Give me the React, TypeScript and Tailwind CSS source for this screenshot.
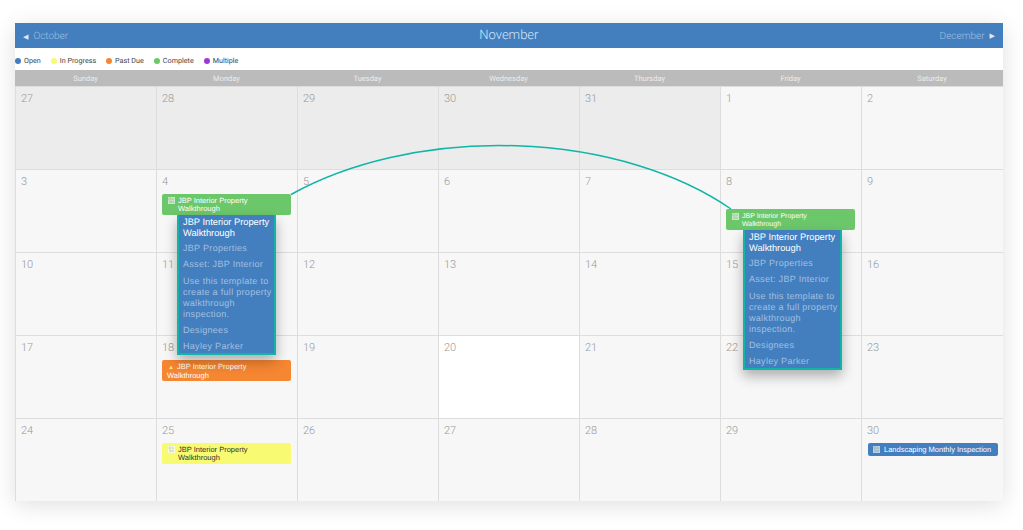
import { Fragment } from "react";

type Status = "green" | "orange" | "yellow";

const LEGEND = [
  { label: "Open", dot: "bg-[#437fbf]" },
  { label: "In Progress", dot: "bg-[#f8fb72]" },
  { label: "Past Due", dot: "bg-[#f58632]" },
  { label: "Complete", dot: "bg-[#6cc76b]" },
  { label: "Multiple", dot: "bg-[#9b3ad6]" },
];

const DAYS = ["Sunday", "Monday", "Tuesday", "Wednesday", "Thursday", "Friday", "Saturday"];

const WEEKS = [
  [27, 28, 29, 30, 31, 1, 2],
  [3, 4, 5, 6, 7, 8, 9],
  [10, 11, 12, 13, 14, 15, 16],
  [17, 18, 19, 20, 21, 22, 23],
  [24, 25, 26, 27, 28, 29, 30],
];

function ReportIcon({ className }: { className: string }) {
  return (
    <svg viewBox="0 0 8 8" className={className}>
      <rect x="0" y="0" width="8" height="8" fill="currentColor" opacity="0.8" />
      <path d="M1 1h2.5v2.5H1zM4.5 1.5H7M4.5 3H7M1 5H7M1 6.5H7" fill="none" stroke="#4a7a4a" strokeOpacity="0.45" strokeWidth="0.6" />
    </svg>
  );
}

function Popover({ className }: { className: string }) {
  return (
    <div className={`absolute z-20 w-[99px] h-[140px] bg-[#437fbf] border-2 border-t-0 border-[#0fb5a6] pl-[4px] pr-[2px] shadow-[0_6px_12px_rgba(0,0,0,0.3)] font-['Liberation_Sans',sans-serif] text-[9px] tracking-[0.3px] text-[#a3bfe0] ${className}`}>
      <p className="text-[9.3px] leading-[10.5px] tracking-normal text-white pt-[2px]">JBP Interior Property Walkthrough</p>
      <p className="mt-[5px] leading-[11px]">JBP Properties</p>
      <p className="mt-[5px] leading-[11px]">Asset: JBP Interior</p>
      <p className="mt-[6px] leading-[11px]">Use this template to create a full property walkthrough inspection.</p>
      <p className="mt-[5px] leading-[11px]">Designees</p>
      <p className="mt-[5px] leading-[11px]">Hayley Parker</p>
    </div>
  );
}

function Event({ status, className = "" }: { status: Status; className?: string }) {
  const tone = {
    green: "bg-[#6cc76b] text-white",
    orange: "bg-[#f58632] text-white",
    yellow: "bg-[#f8fb72] text-[#333333]",
  }[status];
  return (
    <div className={`relative h-[21px] w-[129px] ml-[5px] rounded-[2px] leading-[8px] pt-[3px] font-['Liberation_Sans',sans-serif] ${tone} ${className}`}>
      {status === "orange" ? (
        <p className="pl-[5px]">
          <span className="text-[#ffe27a] text-[6px] mr-[3px] ml-[1px]">▲</span>JBP Interior Property
          <br />
          Walkthrough
        </p>
      ) : (
        <div className="flex">
          <ReportIcon className={`w-[7px] h-[7px] ml-[6px] mr-[3px] shrink-0 ${status === "yellow" ? "text-white" : "text-[#e6f5e6]"}`} />
          <p>JBP Interior Property<br />Walkthrough</p>
        </div>
      )}
    </div>
  );
}

export default function App() {
  return (
    <div className="bg-white w-[1023px] h-[530px] overflow-hidden pt-[23px] pl-[15px] font-['Roboto',sans-serif] antialiased [text-rendering:geometricPrecision]">
      <div className="relative w-[988px] h-[478px] shadow-[0_4px_22px_rgba(0,0,0,0.13)]">
        {/* Month header */}
        <div className="h-[25px] bg-[#437fbf] flex items-center justify-between pt-[1px] pl-[8px] pr-[8px] text-[#9fbfe2] font-light text-[10px]">
          <span className="flex items-center gap-[5px]"><span className="text-[7px] text-[#dce8f5] mt-[3px]">◀</span>October</span>
          <span className="text-[13px] text-[#d6e4f3] ml-[10px]">November</span>
          <span className="flex items-center gap-[5px]">December<span className="text-[7px] text-[#dce8f5]">▶</span></span>
        </div>

        {/* Legend */}
        <div className="h-[22px] bg-white flex items-center pt-[4px] text-[7.2px] text-[#444444]">
          {LEGEND.map((item) => (
            <Fragment key={item.label}>
              <span className={`w-[6px] h-[6px] rounded-full mr-[3px] ${item.dot}`} />
              <span className="mr-[10px]">{item.label}</span>
            </Fragment>
          ))}
        </div>

        {/* Weekday names */}
        <div className="grid grid-cols-[repeat(6,141px)_142px] h-[16px] pt-[1px] bg-[#bbbbbb] text-[7.5px] text-[#ececec] items-center text-center">
          {DAYS.map((day) => (
            <span key={day}>{day}</span>
          ))}
        </div>

        {/* Weeks */}
        <div className="grid grid-cols-[repeat(6,141px)_142px] grid-rows-[repeat(5,83px)]">
          {WEEKS.map((week, w) =>
            week.map((date, d) => {
              const prevMonth = w === 0 && d < 5;
              const today = w === 3 && d === 3;
              const bg = prevMonth ? "bg-[#ececec]" : today ? "bg-white" : "bg-[#f7f7f7]";
              return (
                <div key={`${w}-${d}`} className={`relative border-t border-l border-[#dddddd] ${bg}`}>
                  <p className="pl-[5px] pt-[5px] text-[11px] leading-[13px] font-light text-[#999999]">{date}</p>
                  {w === 1 && d === 1 && (
                    <>
                      <Event status="green" className="mt-[6px] text-[7.5px]" />
                      <Popover className="left-[20px] top-[45px]" />
                    </>
                  )}
                  {w === 1 && d === 5 && (
                    <>
                      <Event status="green" className="mt-[21px] text-[7px] [&>div]:mt-[1px]" />
                      <Popover className="left-[22px] top-[60px]" />
                    </>
                  )}
                  {w === 3 && d === 1 && <Event status="orange" className="mt-[6px] text-[7.5px]" />}
                  {w === 4 && d === 1 && <Event status="yellow" className="mt-[6px] text-[7.5px]" />}
                  {w === 4 && d === 6 && (
                    <div className="ml-[6px] mt-[6px] w-[130px] h-[13px] rounded-[2px] bg-[#437fbf] text-white text-[7.5px] font-['Liberation_Sans',sans-serif] whitespace-nowrap flex items-center pl-[5px] gap-[4px]">
                      <ReportIcon className="w-[7px] h-[7px] text-[#dce8f5] shrink-0" />
                      Landscaping Monthly Inspection
                    </div>
                  )}
                </div>
              );
            }),
          )}
        </div>

        {/* Link between the two events */}
        <svg className="absolute left-0 top-0 z-10 pointer-events-none" width="988" height="478" viewBox="0 0 988 478" fill="none">
          <path d="M276 171.5 A306 183 0 0 1 716 186" stroke="#0fb5a6" strokeWidth="1.5" />
        </svg>
      </div>
    </div>
  );
}
